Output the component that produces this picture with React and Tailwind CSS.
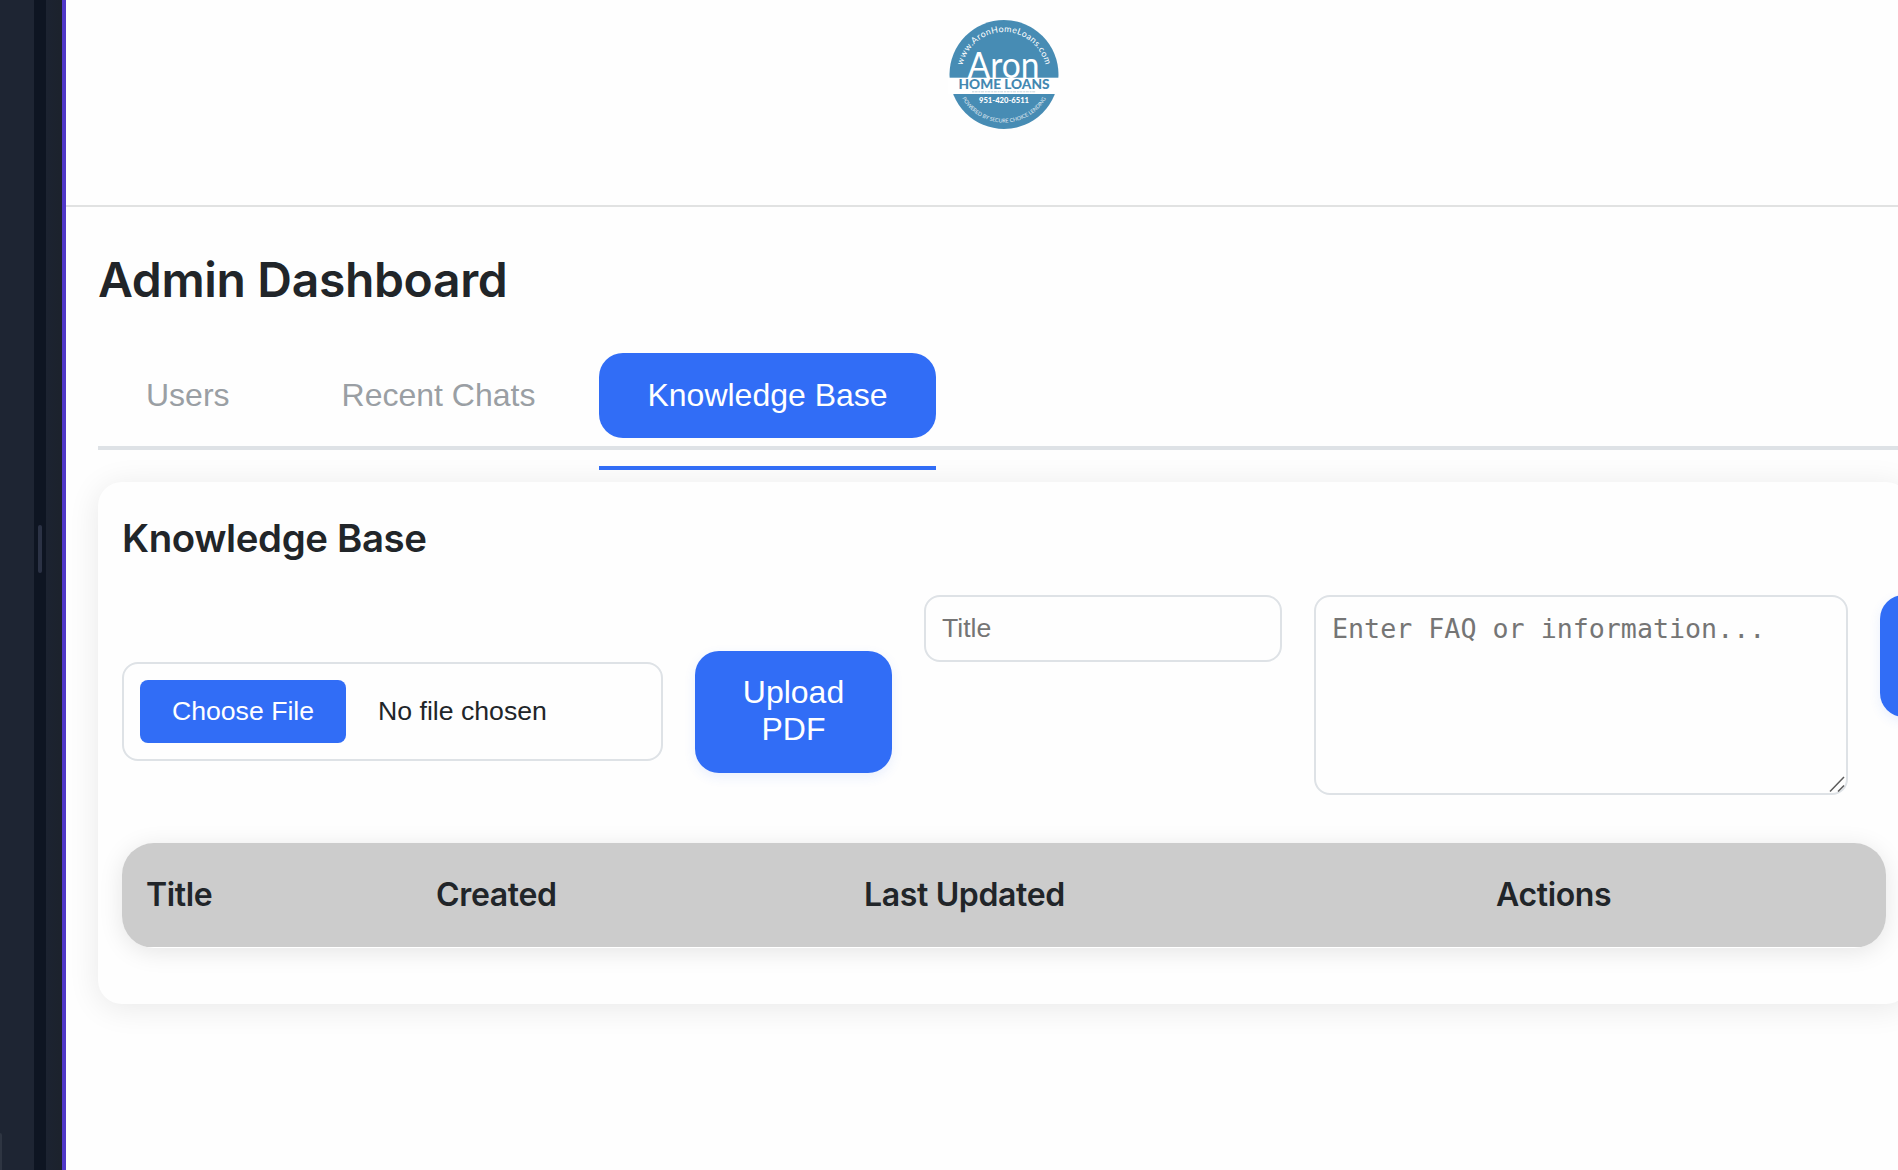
import React from "react";

function Logo() {
  return (
    <svg viewBox="0 0 112 112" className="h-[112px] w-[112px] shrink-0">
      <defs>
        <path id="arcTop" d="M 13.500 56.500 A 42.500 42.500 0 0 1 98.500 56.500" />
        <path id="arcBottom" d="M 7.500 56 A 48.500 48.500 0 0 0 104.500 56" />
      </defs>
      <circle cx="56" cy="56.500" r="54.500" fill="#478cb4" />
      <rect x="0" y="59.700" width="112" height="16.300" fill="#ffffff" />
      <g fontFamily="Lato, sans-serif" fill="#ffffff" textAnchor="middle">
        <text fontSize="8.800" letterSpacing="0.45">
          <textPath href="#arcTop" startOffset="50%">www.AronHomeLoans.com</textPath>
        </text>
        <text x="55.500" y="59.700" fontSize="36" textLength="72" lengthAdjust="spacingAndGlyphs">Aron</text>
        <text x="56" y="71.300" fontSize="12.600" fontWeight="900" fill="#4388b1" textLength="91" lengthAdjust="spacingAndGlyphs">
          HOME LOANS
        </text>
        <text x="56" y="85.300" fontSize="7.800" fontWeight="900" textLength="50" lengthAdjust="spacingAndGlyphs">951-420-6511</text>
        <text fontSize="5.300" opacity="0.85">
          <textPath href="#arcBottom" startOffset="50%">POWERED BY SECURE CHOICE LENDING</textPath>
        </text>
      </g>
      <path d="M24 73.800 H88" stroke="#c3d3dc" strokeWidth="1" strokeDasharray="2 0.6 3 0.8" />
    </svg>
  );
}

function SidePanel() {
  return (
    <aside className="flex h-full w-[66px] shrink-0">
      <div className="flex w-[34px] flex-col justify-end bg-[#1e2533]">
        <div className="h-[37px] w-[2px] rounded-tr-[2px] bg-[#2e3542]" />
      </div>
      <div className="w-3 bg-[#0e1522] pt-[525px]">
        <div className="mx-auto h-12 w-1 rounded-full bg-[#2b3245]" />
      </div>
      <div className="w-4 bg-gradient-to-r from-[#1c2331] to-[#1c222c]" />
      <div className="w-1 bg-[#5038c8]" />
    </aside>
  );
}

function Tab({ label, active }) {
  return (
    <button
      className={
        active
          ? "relative h-[85px] rounded-[24px] bg-[#316df6] px-12 pb-0.5 text-white"
          : "h-[85px] px-12 pb-0.5 text-[#9a9fa4]"
      }
    >
      {label}
      {active && <span className="absolute top-[113px] left-0 h-1 w-full bg-[#316df6]" />}
    </button>
  );
}

function UploadForm() {
  return (
    <div className="mt-[33px] flex h-[201px] items-start gap-8 font-['Liberation_Sans',Arial,sans-serif] text-[26.67px]">
      <div className="flex h-[201px] shrink-0 items-center gap-8 pt-[32px]">
        <div className="flex h-[99px] w-[541px] items-center gap-8 rounded-[16px] border-2 border-[#dee2e6] px-4">
          <span className="flex h-[63px] w-[206px] items-center justify-center rounded-[8px] bg-[#316df6] pb-px whitespace-nowrap text-white">
            Choose File
          </span>
          <span className="pb-px whitespace-nowrap text-[#212529]">No file chosen</span>
        </div>
        <button className="h-[122px] w-[197px] rounded-[24px] bg-[#316df6] px-10 pb-px text-[32px] leading-[37px] text-white shadow-[0_4px_12px_rgba(49,109,246,0.1)]">
          Upload PDF
        </button>
      </div>
      <input
        placeholder="Title"
        className="h-[67px] w-[358px] shrink-0 rounded-[16px] border-2 border-[#dee2e6] px-4 placeholder:text-[#757575]"
      />
      <div className="relative h-[200px] w-[534px] shrink-0">
        <textarea
          placeholder="Enter FAQ or information..."
          className="block h-full w-full resize-none rounded-[16px] border-2 border-[#dee2e6] px-4 py-4 font-['DejaVu_Sans_Mono',monospace] leading-[32px] placeholder:text-[#757575]"
        />
        <svg viewBox="0 0 16 16" className="absolute right-[3px] bottom-[3px] h-4 w-4" stroke="#5c5c5c" strokeWidth="1.500">
          <path d="M1 15.500 L15 1 M9 15.500 L15 9.500" />
        </svg>
      </div>
      <button className="h-[122px] w-[197px] shrink-0 rounded-[24px] bg-[#316df6] shadow-[0_4px_12px_rgba(49,109,246,0.1)]" />
    </div>
  );
}

function EntriesTable() {
  return (
    <div className="mt-[47px] w-[1764px] overflow-hidden rounded-[32px] bg-white pb-px shadow-[0_4px_24px_rgba(0,0,0,0.1)]">
      <div className="grid h-[104px] grid-cols-[290px_428px_632px_1fr] items-center bg-[#cccccc] text-[32px] font-semibold tracking-[-0.35px]">
        <span className="pl-6">Title</span>
        <span className="pl-6">Created</span>
        <span className="pl-6">Last Updated</span>
        <span className="pl-6">Actions</span>
      </div>
    </div>
  );
}

export default function App() {
  return (
    <div className="flex h-[1170px] w-full overflow-hidden bg-[#fefefe] font-['Inter',sans-serif] text-[#212529]">
      <SidePanel />
      <main className="min-w-0 flex-1 overflow-hidden">
        <header className="flex h-[207px] w-[1876px] justify-center border-b-2 border-[#e1e2e2] pt-[18px]">
          <Logo />
        </header>
        <div className="w-[1844px] pl-8">
          <h1 className="pt-[44px] text-[48px] leading-[58px] font-semibold tracking-[-0.34px]">Admin Dashboard</h1>
          <nav className="mt-[44px] flex h-[97px] items-start gap-4 border-b-4 border-[#dee2e6] font-['Liberation_Sans',Arial,sans-serif] text-[32px]">
            <Tab label="Users" />
            <Tab label="Recent Chats" />
            <Tab label="Knowledge Base" active />
          </nav>
          <section className="mt-8 h-[522px] rounded-[24px] bg-[#fefefe] px-6 pt-[32px] shadow-[0_4px_32px_rgba(0,0,0,0.09)]">
            <h2 className="text-[38.4px] leading-[48px] font-semibold tracking-[-0.36px]">Knowledge Base</h2>
            <UploadForm />
            <EntriesTable />
          </section>
        </div>
      </main>
    </div>
  );
}
